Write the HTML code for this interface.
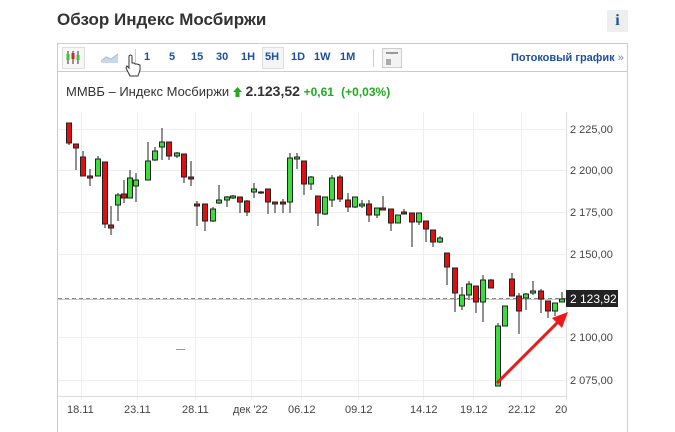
<!DOCTYPE html>
<html><head><meta charset="utf-8"><style>
html,body{margin:0;width:675px;height:432px;overflow:hidden}
body{background:#fff;font-family:"Liberation Sans",Arial,sans-serif;position:relative}
.t{position:absolute;left:57px;top:10px;font-size:17px;font-weight:bold;color:#333}
.info{position:absolute;left:607px;top:10px;width:21px;height:22px;background:#eee;color:#1e4f9c;font:bold 16px "Liberation Serif",serif;text-align:center;line-height:22px}
.frame{position:absolute;left:57px;top:43px;width:569px;height:389px;border:1px solid #ccc;border-bottom:0}
.tb{position:absolute;left:0;top:0;width:569px;height:27px;border-bottom:1px solid #ccc;background:#fff}
.tb span{position:absolute;top:7px;font-size:11px;font-weight:bold;color:#1e4f9c}
.hdr{position:absolute;left:8px;top:39px;font-size:13px;color:#333;white-space:nowrap}
</style></head><body>
<div class="t">Обзор Индекс Мосбиржи</div>
<div class="info">i</div>
<div class="frame">
 <div class="tb">
  <div style="position:absolute;left:4px;top:3px;width:21px;height:20px;border:1px solid #ddd;background:#f7f7f7"></div>
  <svg style="position:absolute;left:7px;top:6px" width="16" height="15"><line x1="3" y1="1" x2="3" y2="14" stroke="#333"/><rect x="1.5" y="4" width="3" height="6" fill="#3c3"/><line x1="8" y1="1" x2="8" y2="14" stroke="#333"/><rect x="6.5" y="3" width="3" height="6" fill="#d22"/><line x1="13" y1="1" x2="13" y2="14" stroke="#333"/><rect x="11.5" y="5" width="3" height="5" fill="#3c3"/></svg>
  <svg style="position:absolute;left:43px;top:9px" width="18" height="10"><path d="M0 8 L5 4 L10 6 L17 1 L17 10 L0 10Z" fill="#c8d8ea"/><path d="M0 8 L5 4 L10 6 L17 1" stroke="#a8bfdc" fill="none"/></svg>
  <div style="position:absolute;left:77px;top:5px;width:1px;height:18px;background:#ccc"></div>
  <span style="left:86px">1</span><span style="left:111px">5</span><span style="left:133px">15</span><span style="left:158px">30</span><span style="left:183px">1H</span>
  <div style="position:absolute;left:204px;top:3px;width:20px;height:20px;border:1px solid #ddd;background:#f5f5f5"></div>
  <span style="left:207px">5H</span><span style="left:233px">1D</span><span style="left:256px">1W</span><span style="left:282px">1M</span>
  <div style="position:absolute;left:315px;top:5px;width:1px;height:18px;background:#ccc"></div>
  <div style="position:absolute;left:324px;top:4px;width:18px;height:18px;border:1px solid #ccc;background:#f3f3f3"><div style="margin:3px;width:12px;height:2px;background:#999"></div><div style="margin:2px 3px;width:5px;height:6px;background:#aaa;float:left"></div></div>
  <span style="left:453px;top:8px">Потоковый график <b style="font-weight:normal;color:#6a8ac4">»</b></span>
 </div>
 <div class="hdr">ММВБ – Индекс Мосбиржи <svg width="9" height="10" style="vertical-align:-1px"><path d="M4.5 0 L9 5 L6.5 5 L6.5 10 L2.5 10 L2.5 5 L0 5Z" fill="#2a2"/></svg> <b style="font-size:14px">2.123,52</b> <b style="color:#2a2;font-size:12px">+0,61</b>&nbsp; <b style="color:#2a2;font-size:12px">(+0,03%)</b></div>
</div>
<svg style="position:absolute;left:0;top:0" width="675" height="432">
<g stroke="#eee" stroke-width="1">
<line x1="58" y1="129.5" x2="566" y2="129.5"/><line x1="58" y1="170.5" x2="566" y2="170.5"/><line x1="58" y1="212.5" x2="566" y2="212.5"/><line x1="58" y1="254.5" x2="566" y2="254.5"/><line x1="58" y1="337.5" x2="566" y2="337.5"/><line x1="58" y1="380.5" x2="566" y2="380.5"/>
<line x1="81.5" y1="112" x2="81.5" y2="400"/><line x1="137.5" y1="112" x2="137.5" y2="400"/><line x1="195.5" y1="112" x2="195.5" y2="400"/><line x1="251.5" y1="112" x2="251.5" y2="400"/><line x1="301.5" y1="112" x2="301.5" y2="400"/><line x1="358.5" y1="112" x2="358.5" y2="400"/><line x1="423.5" y1="112" x2="423.5" y2="400"/><line x1="473.5" y1="112" x2="473.5" y2="400"/><line x1="521.5" y1="112" x2="521.5" y2="400"/>
</g>
<line x1="58" y1="396.5" x2="566" y2="396.5" stroke="#ddd"/>
<line x1="566.5" y1="112" x2="566.5" y2="400" stroke="#ddd"/>
<line x1="58" y1="299.5" x2="566" y2="299.5" stroke="#f5b5b5"/>
<line x1="58" y1="298.5" x2="566" y2="298.5" stroke="#888" stroke-dasharray="4,3"/>
<line x1="176" y1="349.5" x2="185" y2="349.5" stroke="#999"/>
<g stroke="#222" stroke-width="1">
<line x1="69" y1="123" x2="69" y2="145"/><rect x="66.5" y="123" width="5" height="20" fill="#e01010"/>
<line x1="76" y1="144" x2="76" y2="170"/><rect x="73.5" y="144" width="5" height="4" fill="#e01010"/>
<line x1="83" y1="151" x2="83" y2="176"/><rect x="80.5" y="157" width="5" height="19" fill="#e01010"/>
<line x1="90" y1="169" x2="90" y2="186"/><rect x="87.5" y="176" width="5" height="2" fill="#e01010"/>
<line x1="98" y1="156" x2="98" y2="176"/><rect x="95.5" y="159" width="5" height="17" fill="#3ddc3d"/>
<line x1="105" y1="162" x2="105" y2="228"/><rect x="102.5" y="162" width="5" height="62" fill="#e01010"/>
<line x1="111" y1="206" x2="111" y2="235"/><rect x="108.5" y="225" width="5" height="3" fill="#e01010"/>
<line x1="118" y1="193" x2="118" y2="221"/><rect x="115.5" y="195" width="5" height="10" fill="#3ddc3d"/>
<line x1="124" y1="180" x2="124" y2="203"/><rect x="121.5" y="194" width="5" height="4" fill="#e01010"/>
<line x1="130" y1="170" x2="130" y2="198"/><rect x="127.5" y="178" width="5" height="20" fill="#3ddc3d"/>
<line x1="136" y1="173" x2="136" y2="202"/><rect x="133.5" y="180" width="5" height="6" fill="#3ddc3d"/>
<line x1="148" y1="142" x2="148" y2="180"/><rect x="145.5" y="161" width="5" height="19" fill="#3ddc3d"/>
<line x1="155" y1="147" x2="155" y2="161"/><rect x="152.5" y="151" width="5" height="9" fill="#3ddc3d"/>
<line x1="162" y1="128" x2="162" y2="160"/><rect x="159.5" y="142" width="5" height="5" fill="#3ddc3d"/>
<line x1="169" y1="142" x2="169" y2="160"/><rect x="166.5" y="142" width="5" height="14" fill="#e01010"/>
<line x1="177" y1="152" x2="177" y2="158"/><rect x="174.5" y="153" width="5" height="3" fill="#3ddc3d"/>
<line x1="184" y1="154" x2="184" y2="183"/><rect x="181.5" y="154" width="5" height="23" fill="#e01010"/>
<line x1="191" y1="161" x2="191" y2="186"/><rect x="188.5" y="177" width="5" height="2" fill="#e01010"/>
<line x1="197" y1="201" x2="197" y2="226"/><rect x="194.5" y="204" width="5" height="2" fill="#e01010"/>
<line x1="205" y1="204" x2="205" y2="231"/><rect x="202.5" y="204" width="5" height="17" fill="#e01010"/>
<line x1="213" y1="207" x2="213" y2="222"/><rect x="210.5" y="209" width="5" height="12" fill="#3ddc3d"/>
<line x1="219" y1="185" x2="219" y2="204"/><rect x="216.5" y="200" width="5" height="3" fill="#3ddc3d"/>
<line x1="227" y1="196" x2="227" y2="207"/><rect x="224.5" y="197" width="5" height="3" fill="#3ddc3d"/>
<line x1="233" y1="195" x2="233" y2="199"/><rect x="230.5" y="196" width="5" height="2" fill="#3ddc3d"/>
<line x1="240" y1="197" x2="240" y2="213"/><rect x="237.5" y="197" width="5" height="5" fill="#e01010"/>
<line x1="247" y1="200" x2="247" y2="216"/><rect x="244.5" y="201" width="5" height="11" fill="#e01010"/>
<line x1="254" y1="183" x2="254" y2="198"/><rect x="251.5" y="189" width="5" height="3" fill="#3ddc3d"/>
<line x1="261" y1="191" x2="261" y2="194"/><rect x="258.5" y="192" width="5" height="1" fill="#3ddc3d"/>
<line x1="268" y1="189" x2="268" y2="214"/><rect x="265.5" y="189" width="5" height="13" fill="#e01010"/>
<line x1="275" y1="202" x2="275" y2="213"/><rect x="272.5" y="202" width="5" height="2" fill="#e01010"/>
<line x1="283" y1="199" x2="283" y2="213"/><rect x="280.5" y="202" width="5" height="2" fill="#e01010"/>
<line x1="290" y1="153" x2="290" y2="213"/><rect x="287.5" y="158" width="5" height="44" fill="#3ddc3d"/>
<line x1="297" y1="153" x2="297" y2="169"/><rect x="294.5" y="157" width="5" height="2" fill="#3ddc3d"/>
<line x1="304" y1="161" x2="304" y2="195"/><rect x="301.5" y="161" width="5" height="23" fill="#e01010"/>
<line x1="311" y1="176" x2="311" y2="190"/><rect x="308.5" y="177" width="5" height="7" fill="#3ddc3d"/>
<line x1="318" y1="196" x2="318" y2="226"/><rect x="315.5" y="196" width="5" height="17" fill="#e01010"/>
<line x1="325" y1="197" x2="325" y2="215"/><rect x="322.5" y="197" width="5" height="17" fill="#3ddc3d"/>
<line x1="332" y1="175" x2="332" y2="207"/><rect x="329.5" y="178" width="5" height="22" fill="#3ddc3d"/>
<line x1="340" y1="175" x2="340" y2="202"/><rect x="337.5" y="177" width="5" height="22" fill="#e01010"/>
<line x1="348" y1="193" x2="348" y2="212"/><rect x="345.5" y="200" width="5" height="7" fill="#e01010"/>
<line x1="355" y1="197" x2="355" y2="208"/><rect x="352.5" y="197" width="5" height="10" fill="#3ddc3d"/>
<line x1="362" y1="200" x2="362" y2="208"/><rect x="359.5" y="204" width="5" height="2" fill="#3ddc3d"/>
<line x1="369" y1="200" x2="369" y2="222"/><rect x="366.5" y="204" width="5" height="11" fill="#e01010"/>
<line x1="377" y1="208" x2="377" y2="218"/><rect x="374.5" y="208" width="5" height="7" fill="#3ddc3d"/>
<line x1="383" y1="196" x2="383" y2="210"/><rect x="380.5" y="208" width="5" height="2" fill="#e01010"/>
<line x1="391" y1="209" x2="391" y2="231"/><rect x="388.5" y="209" width="5" height="14" fill="#e01010"/>
<line x1="398" y1="215" x2="398" y2="223"/><rect x="395.5" y="215" width="5" height="8" fill="#3ddc3d"/>
<line x1="404" y1="209" x2="404" y2="214"/><rect x="401.5" y="212" width="5" height="2" fill="#e01010"/>
<line x1="412" y1="213" x2="412" y2="247"/><rect x="409.5" y="213" width="5" height="9" fill="#e01010"/>
<line x1="419" y1="213" x2="419" y2="225"/><rect x="416.5" y="213" width="5" height="9" fill="#3ddc3d"/>
<line x1="426" y1="221" x2="426" y2="242"/><rect x="423.5" y="221" width="5" height="8" fill="#e01010"/>
<line x1="433" y1="230" x2="433" y2="247"/><rect x="430.5" y="230" width="5" height="12" fill="#e01010"/>
<line x1="440" y1="236" x2="440" y2="243"/><rect x="437.5" y="238" width="5" height="4" fill="#3ddc3d"/>
<line x1="447" y1="253" x2="447" y2="285"/><rect x="444.5" y="253" width="5" height="14" fill="#e01010"/>
<line x1="455" y1="268" x2="455" y2="312"/><rect x="452.5" y="268" width="5" height="25" fill="#e01010"/>
<line x1="462" y1="287" x2="462" y2="310"/><rect x="459.5" y="295" width="5" height="11" fill="#3ddc3d"/>
<line x1="469" y1="281" x2="469" y2="300"/><rect x="466.5" y="284" width="5" height="11" fill="#3ddc3d"/>
<line x1="476" y1="286" x2="476" y2="313"/><rect x="473.5" y="286" width="5" height="16" fill="#e01010"/>
<line x1="483" y1="275" x2="483" y2="322"/><rect x="480.5" y="280" width="5" height="22" fill="#3ddc3d"/>
<line x1="491" y1="279" x2="491" y2="288"/><rect x="488.5" y="280" width="5" height="8" fill="#e01010"/>
<line x1="498" y1="323" x2="498" y2="386"/><rect x="495.5" y="326" width="5" height="60" fill="#3ddc3d"/>
<line x1="505" y1="306" x2="505" y2="326"/><rect x="502.5" y="306" width="5" height="20" fill="#3ddc3d"/>
<line x1="512" y1="273" x2="512" y2="296"/><rect x="509.5" y="279" width="5" height="17" fill="#e01010"/>
<line x1="519" y1="293" x2="519" y2="334"/><rect x="516.5" y="296" width="5" height="15" fill="#e01010"/>
<line x1="526" y1="293" x2="526" y2="310"/><rect x="523.5" y="294" width="5" height="4" fill="#3ddc3d"/>
<line x1="533" y1="281" x2="533" y2="295"/><rect x="530.5" y="291" width="5" height="2" fill="#3ddc3d"/>
<line x1="541" y1="289" x2="541" y2="313"/><rect x="538.5" y="291" width="5" height="8" fill="#e01010"/>
<line x1="548" y1="301" x2="548" y2="318"/><rect x="545.5" y="301" width="5" height="10" fill="#e01010"/>
<line x1="555" y1="303" x2="555" y2="316"/><rect x="552.5" y="303" width="5" height="8" fill="#3ddc3d"/>
<line x1="562" y1="292" x2="562" y2="302"/><rect x="559.5" y="299" width="5" height="3" fill="#3ddc3d"/>
</g>
<line x1="497" y1="383" x2="558" y2="322" stroke="#f01818" stroke-width="3"/>
<polygon points="568,312 552,318 562,328" fill="#f01818"/>
<g font-size="11" fill="#444" font-family="Liberation Sans,sans-serif">
<text x="570" y="133">2 225,00</text><text x="570" y="174">2 200,00</text><text x="570" y="216">2 175,00</text><text x="570" y="258">2 150,00</text><text x="570" y="341">2 100,00</text><text x="570" y="384">2 075,00</text>
<text x="67" y="413">18.11</text><text x="124" y="413">23.11</text><text x="182" y="413">28.11</text><text x="233" y="413">дек '22</text><text x="288" y="413">06.12</text><text x="345" y="413">09.12</text><text x="410" y="413">14.12</text><text x="460" y="413">19.12</text><text x="508" y="413">22.12</text><text x="555" y="413">20</text>
</g>
<rect x="566" y="290" width="52" height="17" fill="#222"/>
<text x="570" y="303" font-size="12" fill="#fff" font-family="Liberation Sans,sans-serif">2 123,92</text>
<path d="M129 56 L129 68 L127 66 L126 68 L130 76 L138 76 L140 70 L140 65 L137 64 L135 64 L134 63 L132 63 L132 56 Q130.5 54 129 56 Z" fill="#fff" stroke="#333"/>
</svg>
</body></html>
